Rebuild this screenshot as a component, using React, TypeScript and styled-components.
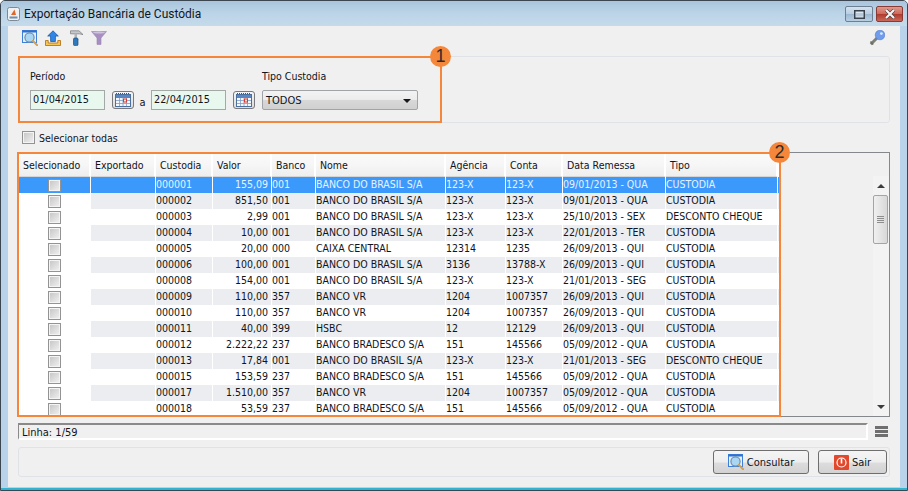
import React from "react";
import styled, { createGlobalStyle } from "styled-components";

interface Registro {
  custodia: string;
  valor: string;
  banco: string;
  nome: string;
  agencia: string;
  conta: string;
  remessa: string;
  tipo: string;
}

const registros: Registro[] = [
  { custodia: "000001", valor: "155,09", banco: "001", nome: "BANCO DO BRASIL S/A", agencia: "123-X", conta: "123-X", remessa: "09/01/2013 - QUA", tipo: "CUSTODIA" },
  { custodia: "000002", valor: "851,50", banco: "001", nome: "BANCO DO BRASIL S/A", agencia: "123-X", conta: "123-X", remessa: "09/01/2013 - QUA", tipo: "CUSTODIA" },
  { custodia: "000003", valor: "2,99", banco: "001", nome: "BANCO DO BRASIL S/A", agencia: "123-X", conta: "123-X", remessa: "25/10/2013 - SEX", tipo: "DESCONTO CHEQUE" },
  { custodia: "000004", valor: "10,00", banco: "001", nome: "BANCO DO BRASIL S/A", agencia: "123-X", conta: "123-X", remessa: "22/01/2013 - TER", tipo: "CUSTODIA" },
  { custodia: "000005", valor: "20,00", banco: "000", nome: "CAIXA CENTRAL", agencia: "12314", conta: "1235", remessa: "26/09/2013 - QUI", tipo: "CUSTODIA" },
  { custodia: "000006", valor: "100,00", banco: "001", nome: "BANCO DO BRASIL S/A", agencia: "3136", conta: "13788-X", remessa: "26/09/2013 - QUI", tipo: "CUSTODIA" },
  { custodia: "000008", valor: "154,00", banco: "001", nome: "BANCO DO BRASIL S/A", agencia: "123-X", conta: "123-X", remessa: "21/01/2013 - SEG", tipo: "CUSTODIA" },
  { custodia: "000009", valor: "110,00", banco: "357", nome: "BANCO VR", agencia: "1204", conta: "1007357", remessa: "26/09/2013 - QUI", tipo: "CUSTODIA" },
  { custodia: "000010", valor: "110,00", banco: "357", nome: "BANCO VR", agencia: "1204", conta: "1007357", remessa: "26/09/2013 - QUI", tipo: "CUSTODIA" },
  { custodia: "000011", valor: "40,00", banco: "399", nome: "HSBC", agencia: "12", conta: "12129", remessa: "26/09/2013 - QUI", tipo: "CUSTODIA" },
  { custodia: "000012", valor: "2.222,22", banco: "237", nome: "BANCO BRADESCO S/A", agencia: "151", conta: "145566", remessa: "05/09/2012 - QUA", tipo: "CUSTODIA" },
  { custodia: "000013", valor: "17,84", banco: "001", nome: "BANCO DO BRASIL S/A", agencia: "123-X", conta: "123-X", remessa: "21/01/2013 - SEG", tipo: "DESCONTO CHEQUE" },
  { custodia: "000015", valor: "153,59", banco: "237", nome: "BANCO BRADESCO S/A", agencia: "151", conta: "145566", remessa: "05/09/2012 - QUA", tipo: "CUSTODIA" },
  { custodia: "000017", valor: "1.510,00", banco: "357", nome: "BANCO VR", agencia: "1204", conta: "1007357", remessa: "05/09/2012 - QUA", tipo: "CUSTODIA" },
  { custodia: "000018", valor: "53,59", banco: "237", nome: "BANCO BRADESCO S/A", agencia: "151", conta: "145566", remessa: "05/09/2012 - QUA", tipo: "CUSTODIA" },
];

const colunas = ["Selecionado", "Exportado", "Custodia", "Valor", "Banco", "Nome", "Agência", "Conta", "Data Remessa", "Tipo"];
const gridColunas = "72px 65px 57px 59px 44px 130px 60px 57px 103px 112px";

const GlobalStyle = createGlobalStyle`
  html, body {
    margin: 0;
    padding: 0;
    background: #fff;
  }
  body {
    font-family: "DejaVu Sans Condensed", "DejaVu Sans", sans-serif;
    font-size: 10.5px;
    color: #10141c;
  }
`;

const Janela = styled.div`
  box-sizing: border-box;
  width: 908px;
  height: 491px;
  display: flex;
  flex-direction: column;
  background: #b9d3ea;
  border: 1px solid #3b4650;
  border-radius: 5px 5px 0 0;
  box-shadow: inset 0 -2px 0 #2fb5cf;
  overflow: hidden;
`;

const BarraTitulo = styled.div`
  height: 25px;
  flex: none;
  display: flex;
  align-items: center;
  padding: 0 4px 0 6px;
  gap: 4px;
  background: linear-gradient(#a9c5dc 0%, #bcd4e7 50%, #c5dbec 100%);
`;

const Titulo = styled.span`
  flex: 1;
  font-family: Roboto, sans-serif;
  font-size: 12px;
  color: #12161c;
`;

const ControlesJanela = styled.div`
  display: flex;
  gap: 3px;
  align-self: flex-start;
  margin-top: 5px;
`;

const BotaoJanela = styled.div<{ $fechar?: boolean }>`
  box-sizing: border-box;
  width: ${(p) => (p.$fechar ? 27 : 28)}px;
  height: 16px;
  display: flex;
  align-items: center;
  justify-content: center;
  border: 1px solid ${(p) => (p.$fechar ? "#8a3a34" : "#6d7f93")};
  border-radius: 2px;
  background: ${(p) =>
    p.$fechar
      ? "linear-gradient(#dc9a8e 0%, #cf6a5c 48%, #b23a2c 52%, #c8685a 100%)"
      : "linear-gradient(#d4e2ee 0%, #b9cfe2 48%, #9cb8d0 52%, #b8cfe2 100%)"};
`;

const Conteudo = styled.div`
  flex: 1;
  min-height: 0;
  margin: 0 7px 3px 7px;
  padding: 0 10px;
  background: #f0f0f0;
  display: flex;
  flex-direction: column;
`;

const BarraFerramentas = styled.div`
  height: 30px;
  flex: none;
  box-sizing: border-box;
  display: flex;
  align-items: center;
  justify-content: space-between;
  padding: 0 5px 6px 4px;
`;

const GrupoIcones = styled.div`
  display: flex;
  gap: 7px;
`;

const Painel = styled.div`
  position: relative;
  height: 67px;
  flex: none;
  box-sizing: border-box;
  border: 1px solid #dfe3e8;
  border-radius: 3px;
  padding: 13px 11px 0;
  display: flex;
  gap: 7px;
`;

const Destaque = styled.div<{ $largura: number }>`
  position: absolute;
  left: -1px;
  top: -1px;
  bottom: -1px;
  width: ${(p) => p.$largura}px;
  border: 2px solid #f5873a;
  box-sizing: border-box;
  pointer-events: none;
  z-index: 2;
`;

const Numero = styled.div`
  position: absolute;
  right: -11px;
  top: -12px;
  width: 21px;
  height: 21px;
  border-radius: 50%;
  background: #f5873a;
  color: #2c2c2c;
  font-family: "Liberation Sans", sans-serif;
  font-size: 18px;
  line-height: 21px;
  text-align: center;
`;

const CampoGrupo = styled.div`
  display: flex;
  flex-direction: column;
  gap: 7px;
`;

const Rotulo = styled.label`
  height: 13px;
  line-height: 13px;
`;

const LinhaCampos = styled.div`
  display: flex;
  align-items: center;
  height: 20px;
`;

const CampoData = styled.div`
  box-sizing: border-box;
  width: 75px;
  height: 20px;
  padding-left: 2px;
  line-height: 18px;
  font-size: 10.8px;
  background: #e9f8ef;
  border: 1px solid #a3a9a6;
`;

const BotaoCalendario = styled.div`
  box-sizing: border-box;
  width: 22px;
  height: 18px;
  margin-left: 7px;
  display: flex;
  align-items: center;
  justify-content: center;
  border: 1px solid #77797c;
  border-radius: 3px;
  background: linear-gradient(#f5f5f5, #dcdcdc);
`;

const Ate = styled.span`
  width: 17px;
  text-align: center;
  padding-top: 4px;
  font-size: 11px;
`;

const Combo = styled.div`
  box-sizing: border-box;
  width: 156px;
  height: 20px;
  display: flex;
  align-items: center;
  justify-content: space-between;
  padding: 0 6px 0 3px;
  font-size: 11px;
  border: 1px solid #a0a3a8;
  border-radius: 2px;
  background: linear-gradient(#f3f3f3 0%, #ececec 48%, #d8d8d8 52%, #d0d0d0 100%);
`;

const SetaCombo = styled.span`
  width: 0;
  height: 0;
  margin-top: 2px;
  border-left: 4px solid transparent;
  border-right: 4px solid transparent;
  border-top: 4px solid #14181c;
`;

const LinhaSelecao = styled.label`
  height: 29px;
  flex: none;
  display: flex;
  align-items: center;
  gap: 4px;
  padding-left: 4px;
  box-sizing: border-box;
`;

const Caixa = styled.span`
  box-sizing: border-box;
  display: block;
  flex: none;
  width: 13px;
  height: 13px;
  border: 1px solid #939393;
  box-shadow: inset 0 0 0 1px #f4f4f4;
  background: linear-gradient(135deg, #c4c4c4, #f2f2f2);
`;

const AreaTabela = styled.div`
  position: relative;
  box-sizing: border-box;
  height: 265px;
  flex: none;
  border: 1px solid #84888c;
  border-left: 0;
  display: flex;
  justify-content: space-between;
`;

const Tabela = styled.div`
  width: 762px;
  padding: 1px 0 0 1px;
  box-sizing: border-box;
`;

const Cabecalho = styled.div`
  display: grid;
  grid-template-columns: ${gridColunas};
  height: 23px;
  background: #fff;
`;

const CelulaCabecalho = styled.div`
  box-sizing: border-box;
  padding: 0 0 0 4px;
  line-height: 22px;
  white-space: nowrap;
  border-right: 2px solid #fff;
  border-bottom: 1px solid #d5d5d5;
  background: linear-gradient(#fafafa 0%, #f6f6f6 50%, #eeeeee 100%);
`;

const Linha = styled.div<{ $selecionada: boolean; $par: boolean }>`
  display: grid;
  grid-template-columns: ${gridColunas};
  height: 16px;
  line-height: 15px;
  background: ${(p) => (p.$selecionada ? "#3b99fc" : p.$par ? "#ebedf0" : "#fff")};
  color: ${(p) => (p.$selecionada ? "#e8f2ff" : "#10141c")};
`;

const Celula = styled.div<{ $direita?: boolean }>`
  padding: ${(p) => (p.$direita ? "0 3px 0 1px" : "0")};
  white-space: nowrap;
  overflow: hidden;
  text-align: ${(p) => (p.$direita ? "right" : "left")};
  border-right: 1px solid #fff;
  box-sizing: border-box;
`;

const CelulaCheck = styled.div<{ $selecionada: boolean }>`
  display: flex;
  align-items: center;
  justify-content: center;
  background: ${(p) => (p.$selecionada ? "transparent" : "#fff")};
  border-right: 1px solid #fff;
`;

const BarraRolagem = styled.div`
  width: 16px;
  margin-top: 23px;
  flex: none;
  display: flex;
  flex-direction: column;
  align-items: center;
  background: #f3f3f3;
  position: relative;
`;

const SetaRolagem = styled.span<{ $baixo?: boolean }>`
  width: 0;
  height: 0;
  margin: ${(p) => (p.$baixo ? "auto 0 7px" : "8px 0 0")};
  border-left: 4px solid transparent;
  border-right: 4px solid transparent;
  ${(p) => (p.$baixo ? "border-top: 4px solid #3c3c3c;" : "border-bottom: 4px solid #3c3c3c;")}
`;

const Polegar = styled.div`
  position: absolute;
  top: 19px;
  left: 0;
  width: 15px;
  height: 49px;
  box-sizing: border-box;
  border: 1px solid #a4a4a4;
  border-radius: 2px;
  background: linear-gradient(90deg, #f0f0f0, #d8d8d8);
  display: flex;
  flex-direction: column;
  justify-content: center;
  align-items: center;
  gap: 1px;
`;

const Estria = styled.span`
  width: 7px;
  height: 1px;
  background: #8d8d8d;
`;

const LinhaStatus = styled.div`
  display: flex;
  align-items: center;
  gap: 7px;
  margin-top: 6px;
  height: 17px;
  flex: none;
`;

const Status = styled.div`
  flex: 1;
  box-sizing: border-box;
  height: 17px;
  padding-left: 3px;
  line-height: 16px;
  font-size: 11px;
  border-style: solid;
  border-width: 2px 2px 2px 1px;
  border-color: #8a8a8a #fff #fff #8a8a8a;
`;

const MenuLinhas = styled.div`
  width: 13px;
  margin-right: 2px;
  display: flex;
  flex-direction: column;
  gap: 1px;
`;

const MenuTraco = styled.span`
  height: 3px;
  background: #6f6f6f;
`;

const Rodape = styled.div`
  margin-top: 7px;
  height: 30px;
  flex: none;
  box-sizing: border-box;
  border: 1px solid #dfe3e8;
  border-radius: 3px;
  display: flex;
  justify-content: flex-end;
  align-items: center;
  gap: 9px;
  padding-right: 2px;
`;

const Botao = styled.button<{ $largura: number }>`
  box-sizing: border-box;
  width: ${(p) => p.$largura}px;
  height: 24px;
  display: flex;
  align-items: center;
  justify-content: center;
  gap: 3px;
  font: inherit;
  font-size: 11px;
  color: #10141c;
  padding: 0;
  border: 1px solid #6e6e6e;
  border-radius: 3px;
  background: linear-gradient(#f4f4f4 0%, #eeeeee 50%, #dcdcdc 55%, #d2d2d2 100%);
`;

const IconeLupa = () => (
  <svg width="16" height="16" viewBox="0 0 16 16">
    <rect x="0.5" y="0.5" width="14" height="12" fill="#e4f0fb" stroke="#3f7fd8" />
    <rect x="0.5" y="0.5" width="14" height="2" fill="#2f6fd0" />
    <circle cx="7.5" cy="7.5" r="4.6" fill="#a9d6f2" stroke="#6f8ea8" strokeWidth="1.2" />
    <path d="M11 11 L15.2 15.2" stroke="#d9a04a" strokeWidth="2" strokeLinecap="round" />
  </svg>
);

const IconeExportar = () => (
  <svg width="16" height="16" viewBox="0 0 16 16">
    <path d="M0.5 10.5 V15.5 H15.5 V10.5 H12.8 V13 H3.2 V10.5 Z" fill="#f6c552" stroke="#b5761c" strokeWidth="0.9" />
    <path d="M8 0.8 L13.3 6 H10.4 V11.5 H5.6 V6 H2.7 Z" fill="#2f86e6" stroke="#1a5cb0" strokeWidth="0.8" />
  </svg>
);

const IconeFerramentas = () => (
  <svg width="16" height="16" viewBox="0 0 16 16">
    <path d="M2.5 0.8 H11 L15 4.6 L11.5 3.8 H2.5 Z" fill="#c6c8ca" stroke="#7d8186" strokeWidth="0.8" />
    <rect x="6.5" y="3.5" width="2.5" height="5" fill="#b0b4b8" />
    <rect x="5.5" y="8" width="4.5" height="7.6" rx="1.2" fill="#2f78ba" stroke="#1c4f80" strokeWidth="0.7" />
  </svg>
);

const IconeFunil = () => (
  <svg width="16" height="16" viewBox="0 0 16 16">
    <path d="M0.5 1.5 H15.5 L10 8 V14.5 L6 14.5 V8 Z" fill="#a78fc2" stroke="#9a88b4" strokeWidth="0.6" />
    <ellipse cx="8" cy="2.6" rx="6" ry="1" fill="#cfc3de" />
  </svg>
);

const IconeChave = () => (
  <svg width="16" height="16" viewBox="0 0 16 16">
    <path d="M8.5 7.5 L1.8 14.2" stroke="#7c8078" strokeWidth="3" />
    <path d="M1.5 11.5 L4.2 14.5" stroke="#6a6e68" strokeWidth="1.4" />
    <circle cx="11" cy="5" r="4.8" fill="#6f9ceb" stroke="#4e7bd0" strokeWidth="0.6" />
    <circle cx="12.4" cy="3.6" r="1.4" fill="#dbe8fb" />
  </svg>
);

const IconeCalendario = () => (
  <svg width="16" height="14" viewBox="0 0 16 14">
    <path d="M1 0.5 H15" stroke="#555" strokeWidth="1" strokeDasharray="1 1" />
    <rect x="0.5" y="1.5" width="15" height="12" fill="#f4f7fb" stroke="#4d6f9e" />
    <rect x="1" y="2" width="14" height="3" fill="#5a86c4" />
    <path d="M1 7.5 H15 M1 10.5 H15 M4.5 5 V13 M8 5 V13 M11.5 5 V13" stroke="#7f9cc6" strokeWidth="0.8" />
    <rect x="8.5" y="6" width="3" height="3" fill="#fbe4de" stroke="#e0392b" strokeWidth="1" />
  </svg>
);

const IconeSair = () => (
  <svg width="15" height="15" viewBox="0 0 15 15">
    <rect width="15" height="15" rx="1" fill="#e2492c" />
    <circle cx="7.5" cy="7.5" r="4.5" fill="none" stroke="#fff" strokeWidth="1.2" />
    <path d="M7.5 3.5 V8.5" stroke="#fff" strokeWidth="1.6" />
  </svg>
);

const IconeApp = () => (
  <svg width="13" height="14" viewBox="0 0 13 14">
    <rect x="0.5" y="0.5" width="12" height="13" rx="2" fill="#eef0f2" stroke="#7d8a96" />
    <path d="M2.5 9.5 H10.5 V11.5 H2.5 Z" fill="#6f8fae" />
    <path d="M7.5 2.5 L4 8 H9 Z" fill="#e0662a" />
  </svg>
);

const IconeRestaurar = () => (
  <svg width="11" height="9" viewBox="0 0 11 9">
    <rect x="0.75" y="0.75" width="9.5" height="7.5" fill="#dfe8f0" stroke="#39424c" strokeWidth="1.5" />
    <rect x="2" y="3" width="7" height="3.5" fill="#b7cade" />
  </svg>
);

const IconeFechar = () => (
  <svg width="14" height="10" viewBox="0 0 14 10">
    <path d="M3 1 L11 9 M11 1 L3 9" stroke="#4a3a3a" strokeWidth="3.4" />
    <path d="M3 1 L11 9 M11 1 L3 9" stroke="#f5f5f5" strokeWidth="2.2" />
  </svg>
);

const App: React.FC = () => {
  return (
    <>
      <GlobalStyle />
      <Janela>
        <BarraTitulo>
          <IconeApp />
          <Titulo>Exportação Bancária de Custódia</Titulo>
          <ControlesJanela>
            <BotaoJanela>
              <IconeRestaurar />
            </BotaoJanela>
            <BotaoJanela $fechar>
              <IconeFechar />
            </BotaoJanela>
          </ControlesJanela>
        </BarraTitulo>
        <Conteudo>
          <BarraFerramentas>
            <GrupoIcones>
              <IconeLupa />
              <IconeExportar />
              <IconeFerramentas />
              <IconeFunil />
            </GrupoIcones>
            <IconeChave />
          </BarraFerramentas>

          <Painel>
            <Destaque $largura={424}>
              <Numero>1</Numero>
            </Destaque>
            <CampoGrupo>
              <Rotulo>Período</Rotulo>
              <LinhaCampos>
                <CampoData>01/04/2015</CampoData>
                <BotaoCalendario>
                  <IconeCalendario />
                </BotaoCalendario>
                <Ate>a</Ate>
                <CampoData>22/04/2015</CampoData>
                <BotaoCalendario>
                  <IconeCalendario />
                </BotaoCalendario>
              </LinhaCampos>
            </CampoGrupo>
            <CampoGrupo>
              <Rotulo>Tipo Custodia</Rotulo>
              <LinhaCampos>
                <Combo>
                  TODOS
                  <SetaCombo />
                </Combo>
              </LinhaCampos>
            </CampoGrupo>
          </Painel>

          <LinhaSelecao>
            <Caixa />
            Selecionar todas
          </LinhaSelecao>

          <AreaTabela>
            <Destaque $largura={764}>
              <Numero>2</Numero>
            </Destaque>
            <Tabela>
              <Cabecalho>
                {colunas.map((coluna) => (
                  <CelulaCabecalho key={coluna}>{coluna}</CelulaCabecalho>
                ))}
              </Cabecalho>
              {registros.map((r, i) => (
                <Linha key={r.custodia} $selecionada={i === 0} $par={i % 2 === 1}>
                  <CelulaCheck $selecionada={i === 0}>
                    <Caixa />
                  </CelulaCheck>
                  <Celula />
                  <Celula>{r.custodia}</Celula>
                  <Celula $direita>{r.valor}</Celula>
                  <Celula>{r.banco}</Celula>
                  <Celula>{r.nome}</Celula>
                  <Celula>{r.agencia}</Celula>
                  <Celula>{r.conta}</Celula>
                  <Celula>{r.remessa}</Celula>
                  <Celula>{r.tipo}</Celula>
                </Linha>
              ))}
            </Tabela>
            <BarraRolagem>
              <SetaRolagem />
              <Polegar>
                <Estria />
                <Estria />
                <Estria />
                <Estria />
              </Polegar>
              <SetaRolagem $baixo />
            </BarraRolagem>
          </AreaTabela>

          <LinhaStatus>
            <Status>Linha: 1/59</Status>
            <MenuLinhas>
              <MenuTraco />
              <MenuTraco />
              <MenuTraco />
            </MenuLinhas>
          </LinhaStatus>

          <Rodape>
            <Botao $largura={96}>
              <IconeLupa />
              Consultar
            </Botao>
            <Botao $largura={69}>
              <IconeSair />
              Sair
            </Botao>
          </Rodape>
        </Conteudo>
      </Janela>
    </>
  );
};

export default App;
